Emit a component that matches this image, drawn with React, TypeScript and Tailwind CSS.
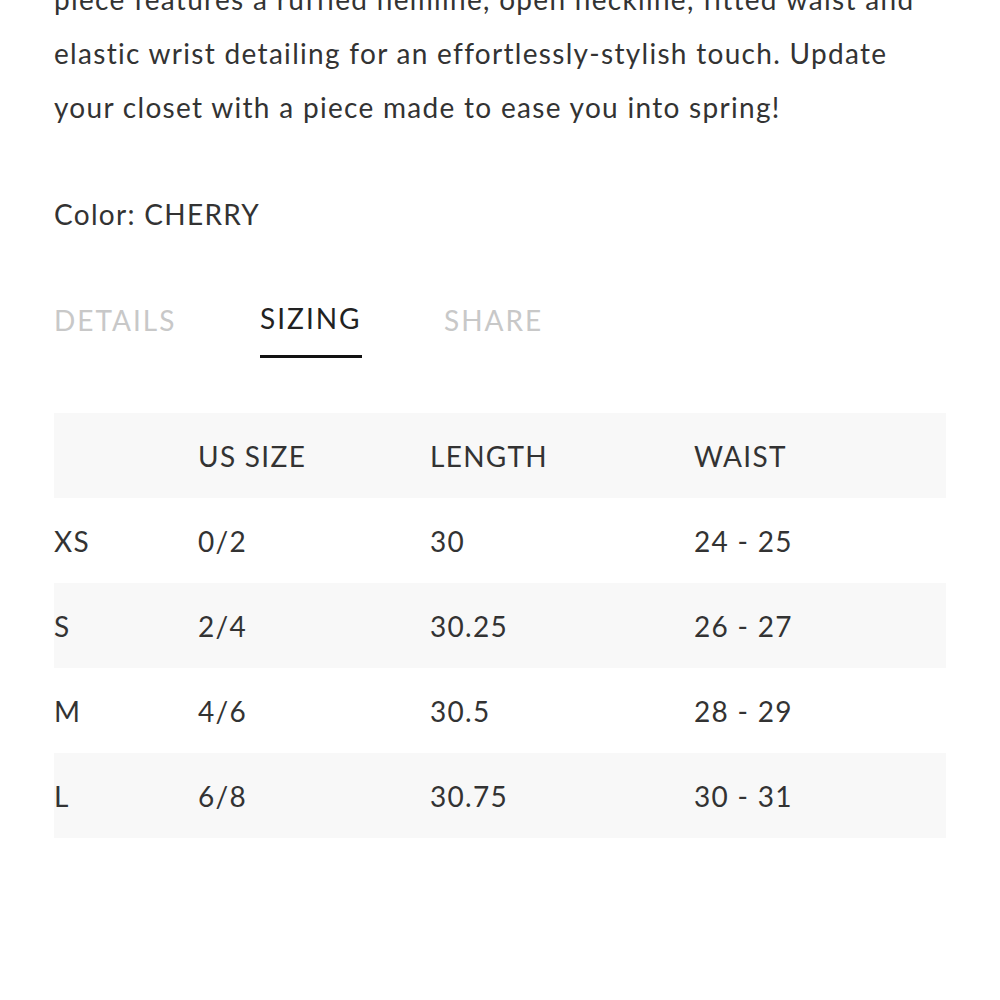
const rows = [
  ["XS", "0/2", "30", "24 - 25"],
  ["S", "2/4", "30.25", "26 - 27"],
  ["M", "4/6", "30.5", "28 - 29"],
  ["L", "6/8", "30.75", "30 - 31"],
];

export default function App() {
  return (
    <div
      className="min-h-[1000px] bg-white text-[#333] overflow-hidden"
      style={{ fontFamily: "Lato, 'Open Sans', sans-serif" }}
    >
      <div className="px-[54px] mt-[-28px]">
        <p className="text-[28px] leading-[54px] tracking-[1.3px] whitespace-nowrap">
          piece features a ruffled hemline, open neckline, fitted waist and
          <br />
          elastic wrist detailing for an effortlessly-stylish touch. Update
          <br />
          your closet with a piece made to ease you into spring!
        </p>
        <p className="mt-[53px] text-[28px] leading-[54px] tracking-[1.3px]">Color: CHERRY</p>

        <div className="mt-[56px] flex text-[28px] tracking-[2px]">
          <button className="w-[206px] text-left text-[#c8c8c8] pb-[16px]">DETAILS</button>
          <button className="w-[184px] text-left">
            <span className="inline-block border-b-[3px] border-[#111] pb-[16px] text-[#222]">SIZING</span>
          </button>
          <button className="text-left text-[#c8c8c8] pb-[16px]">SHARE</button>
        </div>

        <table className="mt-[55px] w-[892px] text-[28px] tracking-[1.3px] text-[#333] border-collapse">
          <thead>
            <tr className="bg-[#f8f8f8] h-[85px]">
              <th className="w-[144px] font-normal text-left"></th>
              <th className="w-[232px] font-normal text-left">US SIZE</th>
              <th className="w-[264px] font-normal text-left">LENGTH</th>
              <th className="font-normal text-left">WAIST</th>
            </tr>
          </thead>
          <tbody>
            {rows.map((r, i) => (
              <tr key={r[0]} className={i % 2 === 1 ? "bg-[#f8f8f8] h-[85px]" : "h-[85px]"}>
                {r.map((c, j) => (
                  <td key={j} className="text-left">{c}</td>
                ))}
              </tr>
            ))}
          </tbody>
        </table>
      </div>
    </div>
  );
}
